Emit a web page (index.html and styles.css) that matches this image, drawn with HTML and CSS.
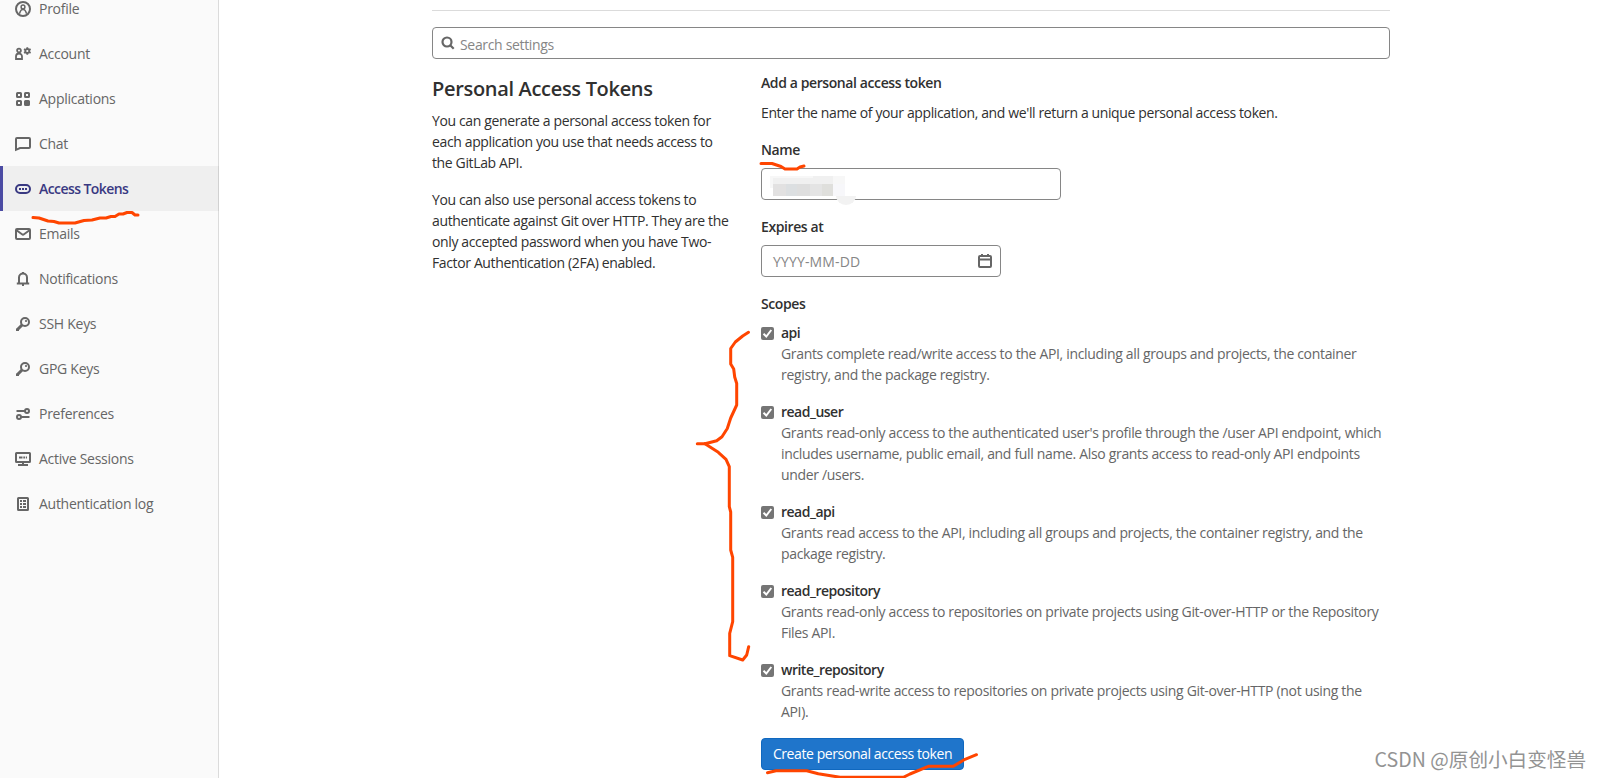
FILE: index.html
```html
<!DOCTYPE html>
<html lang="en">
<head>
    <meta charset="UTF-8">
    <meta name="viewport" content="width=device-width, initial-scale=1.0">
    <title>Personal Access Tokens</title>
    <link rel="stylesheet" href="styles.css">
</head>
<body>
    <div class="page">
        <nav class="sidebar">
            <a class="nav-item"><svg class="icon" viewBox="0 0 16 16"><circle cx="8" cy="8" r="7"/><g class="thin"><circle cx="8" cy="6" r="1.9"/><path d="M4.400 12.800l1-2.600a2.800 2.800 0 0 1 5.200 0l1 2.600"/></g></svg><span>Profile</span></a>
            <a class="nav-item"><svg class="icon" viewBox="0 0 16 16"><g class="mid"><circle cx="4" cy="4.500" r="1.900"/><path d="M1 13v-2.500a3 3 0 0 1 6 0V13z"/><circle cx="12.300" cy="5" r="2"/><path d="M12.300 1.200V3M12.300 7v1.800M9 3.100l1.600.9M14 6l1.600.9M9 6.900l1.600-.9M14 4l1.600-.9"/></g></svg><span>Account</span></a>
            <a class="nav-item"><svg class="icon" viewBox="0 0 16 16"><rect x="2" y="2" width="4" height="4" rx=".5"/><rect x="10" y="2" width="4" height="4" rx=".5"/><rect x="2" y="10" width="4" height="4" rx=".5"/><rect class="solid" x="10" y="10" width="4" height="4" rx=".5"/></svg><span>Applications</span></a>
            <a class="nav-item"><svg class="icon" viewBox="0 0 16 16"><path d="M1 13.800V3a1 1 0 0 1 1-1h12a1 1 0 0 1 1 1v8a1 1 0 0 1-1 1H5z"/></svg><span>Chat</span></a>
            <a class="nav-item active"><svg class="icon" viewBox="0 0 16 16"><rect x="1" y="4" width="14" height="8" rx="4"/><path d="M4 8h2M7 8h2M10 8h2"/></svg><span>Access Tokens</span></a>
            <a class="nav-item"><svg class="icon" viewBox="0 0 16 16"><rect x="1" y="3" width="14" height="10" rx="1"/><path d="M1.500 4.300 7 8.300a1.700 1.700 0 0 0 2 0l5.500-4"/></svg><span>Emails</span></a>
            <a class="nav-item"><svg class="icon" viewBox="0 0 16 16"><path d="M4 12V6.500a4 4 0 0 1 8 0V12M1.800 12.500h12.400M8 1v2"/><path class="solid" d="M7 14h2"/></svg><span>Notifications</span></a>
            <a class="nav-item"><svg class="icon" viewBox="0 0 16 16"><circle cx="10" cy="6" r="4"/><circle class="dot" cx="11" cy="5" r="1.100"/><path class="thick" d="M7 9l-4.500 4.500M2.500 12.500v2.500"/></svg><span>SSH Keys</span></a>
            <a class="nav-item"><svg class="icon" viewBox="0 0 16 16"><circle cx="10" cy="6" r="4"/><circle class="dot" cx="11" cy="5" r="1.100"/><path class="thick" d="M7 9l-4.500 4.500M2.500 12.500v2.500"/></svg><span>GPG Keys</span></a>
            <a class="nav-item"><svg class="icon" viewBox="0 0 16 16"><circle cx="12" cy="5" r="2"/><circle cx="4" cy="11" r="2"/><path d="M1.500 5H10M6 11h8.500"/></svg><span>Preferences</span></a>
            <a class="nav-item"><svg class="icon" viewBox="0 0 16 16"><rect x="1" y="2" width="14" height="9" rx=".5"/><path d="M4 6.500h3.500M8.300 6.500h1.700M10.800 6.500H12M8 11v2.500M3 14h10"/></svg><span>Active Sessions</span></a>
            <a class="nav-item"><svg class="icon" viewBox="0 0 16 16"><rect x="3" y="2" width="10" height="12" rx=".5"/><path d="M5 5h2M8 5h3M5 8h2M8 8h3M5 11h2M8 11h3"/></svg><span>Authentication log</span></a>
        </nav>
        <main class="content">
            <div class="divider"></div>
            <div class="search">
                <svg class="search-icon" viewBox="0 0 16 16"><circle cx="7" cy="7" r="4.500"/><path d="M10.500 10.500l3.200 3.200"/></svg>
                <span>Search settings</span>
            </div>
            <div class="columns">
                <section class="intro">
                    <h4>Personal Access Tokens</h4>
                    <p>You can generate a personal access token for<br>each application you use that needs access to<br>the GitLab API.</p>
                    <p>You can also use personal access tokens to<br>authenticate against Git over HTTP. They are the<br>only accepted password when you have Two-<br>Factor Authentication (2FA) enabled.</p>
                </section>
                <section class="token-form">
                    <h5>Add a personal access token</h5>
                    <p class="lead">Enter the name of your application, and we'll return a unique personal access token.</p>
                    <div class="label">Name</div>
                    <div class="input name-input">
                        <svg class="mosaic" viewBox="0 0 90 32"><path fill="#f7f7f7" d="M9 8h75v12H9z"/><path fill="#f0f0f0" d="M12 10h60v6H12zM52 8h20v8H52z"/><path fill="#e2e1e1" d="M12 16h13v12H12z"/><path fill="#dcdfe1" d="M25 16h11v12H25z"/><path fill="#dedede" d="M36 16h13v12H36z"/><path fill="#e4e4e4" d="M49 16h12v12H49z"/><path fill="#dfdfdc" d="M61 16h11v12H61z"/><path fill="#f7f7fa" d="M72 16h12v12H72z"/><path fill="#f2f2f2" d="M75 28h20a10 9 0 0 1-20 0z"/></svg>
                    </div>
                    <div class="label">Expires at</div>
                    <div class="input date-input">
                        <span>YYYY-MM-DD</span>
                        <svg class="icon" viewBox="0 0 16 16"><rect x="2" y="3" width="12" height="11" rx="1"/><path d="M2 6.500h12M5 1v2M11 1v2"/></svg>
                    </div>
                    <div class="label">Scopes</div>
                    <div class="scope">
                        <input type="checkbox" checked>
                        <div><b>api</b><p>Grants complete read/write access to the API, including all groups and projects, the container<br>registry, and the package registry.</p></div>
                    </div>
                    <div class="scope">
                        <input type="checkbox" checked>
                        <div><b>read_user</b><p>Grants read-only access to the authenticated user's profile through the /user API endpoint, which<br>includes username, public email, and full name. Also grants access to read-only API endpoints<br>under /users.</p></div>
                    </div>
                    <div class="scope">
                        <input type="checkbox" checked>
                        <div><b>read_api</b><p>Grants read access to the API, including all groups and projects, the container registry, and the<br>package registry.</p></div>
                    </div>
                    <div class="scope">
                        <input type="checkbox" checked>
                        <div><b>read_repository</b><p>Grants read-only access to repositories on private projects using Git-over-HTTP or the Repository<br>Files API.</p></div>
                    </div>
                    <div class="scope">
                        <input type="checkbox" checked>
                        <div><b>write_repository</b><p>Grants read-write access to repositories on private projects using Git-over-HTTP (not using the<br>API).</p></div>
                    </div>
                    <button class="create">Create personal access token</button>
                </section>
            </div>
        </main>
    </div>

    <!-- hand-drawn marks over the page -->
    <svg class="marks" viewBox="0 0 1601 778">
        <path d="M33 217.500l6 .5 9 3 6 .5 5 1.500h16l9-2.500 8-.5 8-2h6l5-1.500h4l4-2.500h4l4-1.500h5l3 2.500h3"/>
        <path d="M761 163.500h11l9 3 4 2.500h12l3-2 4-1"/>
        <path d="M748.500 332.300L742.700 336 735.300 342 730.700 348.500V364L733.700 369 734.700 377 736.700 383.500V405L730.700 418 727.300 428.500 722 436.700 716.700 440.700 705 443.700H697.300"/>
        <path d="M705 443.700L718.300 452.300 726 459.300 729.300 466.700V506.700L730.700 512V550L732.700 557.300V621.700L729.700 633.300V655.700L742.700 660 746.700 655 748.700 646.700"/>
        <path d="M767.500 772.700L776 770.700H806.700L818.300 773.700 840 777.300H903.300L910 774 928.300 766.300H953.300L965 759.300 976.500 754.700"/>
    </svg>
    <div class="watermark">CSDN @原创小白变怪兽</div>
</body>
</html>
```
FILE: styles.css
```css
* {
    box-sizing: border-box;
}
body {
    margin: 0;
    height: 778px;
    overflow: hidden;
    position: relative;
    font-family: "Open Sans", "Noto Sans", sans-serif;
    font-size: 14px;
    line-height: 21px;
    letter-spacing: -0.27px;
    color: #303030;
    background-color: #fff;
}
h4, h5, p {
    margin: 0;
}
.page {
    display: flex;
    height: 778px;
}
.sidebar {
    width: 219px;
    height: 792px;
    margin-top: -14px;
    background-color: #fafafa;
    border-right: 1px solid #dbdbdb;
}
.nav-item {
    display: flex;
    align-items: center;
    gap: 8px;
    height: 45px;
    padding-left: 15px;
    color: #666;
}
.nav-item .icon {
    margin-top: 1px;
}
.nav-item.active {
    margin-right: -1px;
    padding-left: 12px;
    border-left: 3px solid #4b4ba3;
    border-right: 1px solid #d1d1d1;
    background-color: #efefef;
    color: #393982;
    font-weight: 600;
    letter-spacing: -0.58px;
}
.icon {
    width: 16px;
    height: 16px;
    fill: none;
    stroke: currentColor;
    stroke-width: 2;
}
.icon .solid {
    fill: currentColor;
}
.icon .dot {
    fill: currentColor;
    stroke: none;
}
.icon .thin {
    stroke-width: 1.5;
}
.icon .mid {
    stroke-width: 1.8;
}
.icon .thick {
    stroke-width: 3;
}
.content {
    flex: none;
    width: 958px;
    margin-left: 213px;
    padding-top: 10px;
}
.divider {
    height: 1px;
    background-color: #dbdbdb;
}
.search {
    display: flex;
    align-items: center;
    gap: 4px;
    height: 32px;
    margin-top: 16px;
    padding-left: 7px;
    border: 1px solid #868686;
    border-radius: 4px;
    color: #868686;
    letter-spacing: -0.33px;
}
.search span {
    padding-top: 2px;
}
.search-icon {
    width: 16px;
    height: 16px;
    fill: none;
    stroke: #666;
    stroke-width: 2.2;
}
.columns {
    display: flex;
}
.intro {
    width: 329px;
    padding-top: 18px;
}
.intro h4 {
    font-size: 20px;
    line-height: 24px;
    font-weight: 600;
    letter-spacing: -0.32px;
    margin-bottom: 9px;
}
.intro p {
    margin-bottom: 16px;
    letter-spacing: -0.37px;
}
.token-form {
    flex: 1;
    padding-top: 13px;
    white-space: nowrap;
}
.token-form h5 {
    font-size: 14px;
    font-weight: 600;
    letter-spacing: -0.4px;
    margin-bottom: 9px;
}
.lead {
    margin-bottom: 16px;
    letter-spacing: -0.38px;
}
.label {
    font-weight: 600;
    letter-spacing: -0.4px;
    margin-bottom: 8px;
}
.input {
    height: 32px;
    margin-bottom: 16px;
    border: 1px solid #868686;
    border-radius: 4px;
}
.name-input {
    width: 300px;
}
.mosaic {
    display: block;
    width: 90px;
    height: 32px;
    margin: -1px;
    overflow: visible;
}
.date-input {
    width: 240px;
    display: flex;
    align-items: center;
    justify-content: space-between;
    padding: 0 7px 0 11px;
    color: #868686;
    letter-spacing: 0.15px;
}
.date-input .icon {
    color: #666;
}
.scope {
    display: flex;
    gap: 7px;
    margin-bottom: 16px;
    color: #666;
    letter-spacing: -0.33px;
}
.scope input {
    appearance: none;
    flex: none;
    width: 13px;
    height: 13px;
    margin: 5px 0 0;
    border-radius: 2px;
    background: #757575 url("data:image/svg+xml,%3Csvg xmlns='http://www.w3.org/2000/svg' viewBox='0 0 13 13'%3E%3Cpath d='M2.500 6.800l2.800 2.700 5-6.500' fill='none' stroke='white' stroke-width='2'/%3E%3C/svg%3E");
}
.scope b {
    display: block;
    font-weight: 600;
    letter-spacing: -0.5px;
    color: #303030;
}
.create {
    display: block;
    width: 203px;
    height: 32px;
    padding: 0 0 1px;
    border: 1px solid #1068bf;
    border-radius: 4px;
    background-color: #1f75cb;
    color: #fff;
    font: inherit;
    letter-spacing: -0.41px;
}
.marks {
    position: absolute;
    top: 0;
    left: 0;
    width: 1601px;
    height: 778px;
    fill: none;
    stroke: #ff4500;
    stroke-width: 3;
    stroke-linecap: round;
    stroke-linejoin: round;
    pointer-events: none;
}
.watermark {
    position: absolute;
    right: 15px;
    bottom: 6px;
    font-family: "Noto Sans CJK SC", sans-serif;
    font-size: 19.6px;
    font-weight: 400;
    line-height: 26px;
    letter-spacing: 0;
    color: #939393;
}
```
